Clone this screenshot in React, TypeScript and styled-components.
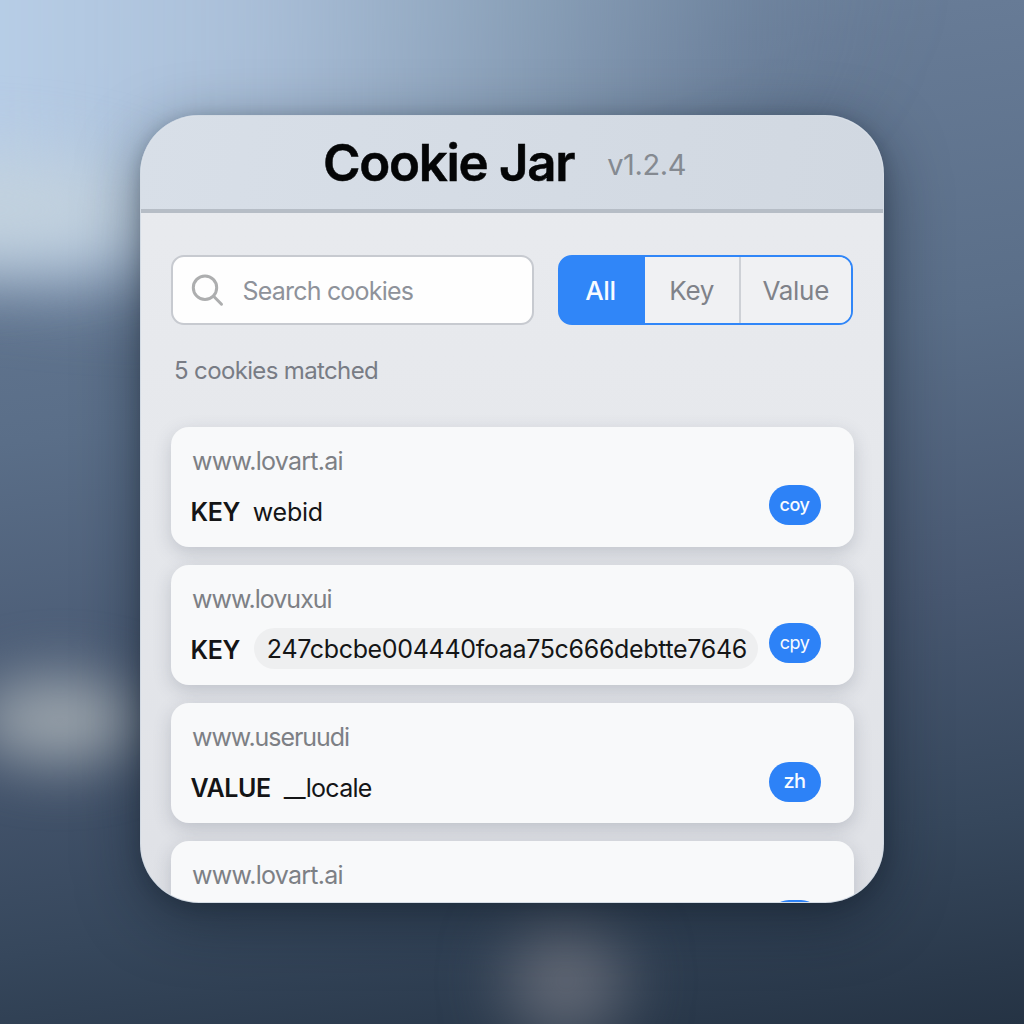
import React, { useState } from "react";
import styled, { createGlobalStyle } from "styled-components";

const GlobalStyle = createGlobalStyle`
  *, *::before, *::after { box-sizing: border-box; }
  body { margin: 0; font-family: Inter, "Liberation Sans", sans-serif; }
`;

const Desktop = styled.main`
  position: relative;
  width: 1024px;
  height: 1024px;
  padding: 115px 0 0 140px;
  overflow: hidden;
  background: linear-gradient(172deg, #70869f 0%, #677b96 12%, #5a6e88 38%, #485871 62%, #36475c 82%, #253344 100%);
`;

const Glow = styled.div<{ $x: number; $y: number; $w: number; $h: number; $color: string; $blur: number }>`
  position: absolute;
  left: ${(p) => p.$x}px;
  top: ${(p) => p.$y}px;
  width: ${(p) => p.$w}px;
  height: ${(p) => p.$h}px;
  border-radius: 50%;
  background: ${(p) => p.$color};
  filter: blur(${(p) => p.$blur}px);
`;

const Panel = styled.section`
  position: relative;
  display: flex;
  flex-direction: column;
  width: 744px;
  height: 788px;
  border: 1px solid rgba(205, 215, 226, 0.75);
  border-radius: 59px;
  overflow: hidden;
  background: linear-gradient(180deg, #e9ebef 0%, #e6e8ec 45%, #dfe1e6 100%);
  box-shadow: 0 16px 60px rgba(14, 24, 36, 0.5), 0 3px 16px rgba(14, 24, 36, 0.2);
`;

const Header = styled.header`
  display: flex;
  flex: none;
  align-items: flex-start;
  gap: 33px;
  height: 97px;
  padding: 17px 0 0 182px;
  border-bottom: 4px solid #b6bdc6;
  background: linear-gradient(100deg, #d8dfe8, #d1d8e1);
`;

const Title = styled.h1`
  margin: 0;
  color: #040506;
  font-size: 51px;
  font-weight: 600;
  line-height: 60px;
  letter-spacing: -1.3px;
  white-space: nowrap;
  -webkit-text-stroke: 0.5px #040506;
`;

const Version = styled.span`
  padding-top: 14px;
  color: #858a91;
  font-size: 29px;
  line-height: 36px;
  letter-spacing: -0.4px;
`;

const Toolbar = styled.div`
  display: flex;
  flex: none;
  gap: 24px;
  padding: 42px 30px 0 29.5px;
`;

const SearchBox = styled.label`
  display: flex;
  align-items: center;
  gap: 18px;
  width: 363px;
  height: 70px;
  padding-left: 18px;
  border: 2px solid #c7cad0;
  border-radius: 13px;
  background: #fefefe;
`;

const SearchInput = styled.input`
  width: 270px;
  padding: 2px 0 0;
  border: 0;
  outline: 0;
  background: transparent;
  color: #30343a;
  font: 400 25px Inter, "Liberation Sans", sans-serif;
  letter-spacing: -0.8px;
  &::placeholder { color: #8e929a; opacity: 1; }
`;

const Segments = styled.div`
  display: flex;
  width: 295px;
  height: 70px;
  border: 2px solid #3086f8;
  border-radius: 14px;
  overflow: hidden;
  background: linear-gradient(90deg, #3086f8 80px, #f0f1f3 80px);
`;

const Segment = styled.button<{ $active: boolean; $width: number; $divided?: boolean }>`
  flex: none;
  width: ${(p) => p.$width}px;
  padding: ${(p) => (p.$active ? "0 3px 0 0" : "0")};
  border: 0;
  border-left: ${(p) => (p.$divided ? "2px solid #ced1d6" : "0")};
  background: ${(p) => (p.$active ? "#3086f8" : "#f0f1f3")};
  color: ${(p) => (p.$active ? "#f7fbff" : "#7f8289")};
  font: ${(p) => (p.$active ? 500 : 400)} 26px Inter, "Liberation Sans", sans-serif;
  letter-spacing: -0.3px;
`;

const Count = styled.p`
  flex: none;
  margin: 31px 0 40.5px 33px;
  color: #787c85;
  font-size: 24px;
  line-height: 30px;
  letter-spacing: -0.64px;
`;

const List = styled.div`
  display: flex;
  flex-direction: column;
  gap: 18px;
  padding: 0 29.5px;
`;

const Card = styled.article`
  display: flex;
  flex: none;
  justify-content: space-between;
  height: 120.2px;
  padding: 0 33px 0 20px;
  border-radius: 18px;
  background: #f8f9fa;
  box-shadow: 0 6px 18px rgba(62, 72, 88, 0.21);
`;

const Details = styled.div`
  padding-top: 19px;
`;

const Domain = styled.div<{ $tracking: number }>`
  padding-left: 1.5px;
  color: #7d8085;
  font-size: 25px;
  line-height: 30px;
  letter-spacing: ${(p) => p.$tracking}px;
`;

const Entry = styled.div`
  display: flex;
  align-items: center;
  height: 42px;
  margin-top: 15px;
  color: #141516;
  font-size: 25px;
`;

const Label = styled.span`
  font-weight: 600;
  letter-spacing: -0.4px;
`;

const Value = styled.span<{ $pill?: boolean; $tracking: number }>`
  display: flex;
  align-items: center;
  height: ${(p) => (p.$pill ? "41px" : "30px")};
  margin-left: ${(p) => (p.$pill ? "14px" : "13px")};
  padding: ${(p) => (p.$pill ? "0 11px 0 13px" : "0")};
  margin-top: ${(p) => (p.$pill ? "-2px" : "0")};
  border-radius: 21px;
  background: ${(p) => (p.$pill ? "#eeeff0" : "transparent")};
  letter-spacing: ${(p) => p.$tracking}px;
`;

const Action = styled.button<{ $size: number; $weight: number }>`
  flex: none;
  width: 52px;
  height: 40px;
  margin-top: 58.7px;
  padding: 0 0 2px;
  border: 0;
  border-radius: 20px;
  background: #2d82f7;
  color: #f8fbff;
  font: ${(p) => p.$weight} ${(p) => p.$size}px Inter, "Liberation Sans", sans-serif;
  letter-spacing: -0.5px;
`;

const SearchIcon = () => (
  <svg width="34" height="34" viewBox="0 0 34 34" fill="none" stroke="#adaeaf" strokeWidth="3" strokeLinecap="round">
    <circle cx="14" cy="14.7" r="11.7" />
    <path d="M22.6 23.3 30.5 31.2" />
  </svg>
);

const cookies = [
  { domain: "www.lovart.ai", domainTracking: -0.75, label: "KEY", value: "webid", tracking: -0.25, action: "coy", size: 18 },
  { domain: "www.lovuxui", domainTracking: -1, label: "KEY", value: "247cbcbe004440foaa75c666debtte7646", tracking: -0.33, action: "cpy", size: 18, pill: true },
  { domain: "www.useruudi", domainTracking: -1.05, label: "VALUE", value: "__locale", tracking: -0.75, action: "zh", size: 20 },
  { domain: "www.lovart.ai", domainTracking: -0.75, label: "KEY", value: "webid", tracking: -0.25, action: "coy", size: 18 },
];

const filters = [
  { name: "All", width: 85 },
  { name: "Key", width: 94.5 },
  { name: "Value", width: 111.5 },
];

export default function App() {
  const [filter, setFilter] = useState("All");
  return (
    <>
      <GlobalStyle />
      <Desktop>
        <Glow
          $x={-500}
          $y={-370}
          $w={1400}
          $h={650}
          $color="linear-gradient(90deg, #b8cee7 480px, rgba(176, 197, 222, 0.9) 760px, rgba(158, 181, 204, 0.62) 1020px, rgba(140, 164, 190, 0.15) 1250px, transparent)"
          $blur={42}
        />
        <Glow $x={-240} $y={155} $w={400} $h={110} $color="rgba(196, 211, 222, 0.9)" $blur={34} />
        <Glow $x={-25} $y={678} $w={170} $h={84} $color="rgba(158, 167, 174, 0.98)" $blur={30} />
        <Glow $x={508} $y={920} $w={116} $h={120} $color="rgba(108, 113, 124, 0.85)" $blur={33} />
        <Panel>
          <Header>
            <Title>Cookie Jar</Title>
            <Version>v1.2.4</Version>
          </Header>
          <Toolbar>
            <SearchBox>
              <SearchIcon />
              <SearchInput placeholder="Search cookies" />
            </SearchBox>
            <Segments>
              {filters.map((f) => (
                <Segment
                  key={f.name}
                  $active={filter === f.name}
                  $width={f.width}
                  $divided={f.name === "Value"}
                  onClick={() => setFilter(f.name)}
                >
                  {f.name}
                </Segment>
              ))}
            </Segments>
          </Toolbar>
          <Count>5 cookies matched</Count>
          <List>
            {cookies.map((c, i) => (
              <Card key={i}>
                <Details>
                  <Domain $tracking={c.domainTracking}>{c.domain}</Domain>
                  <Entry>
                    <Label>{c.label}</Label>
                    <Value $pill={c.pill} $tracking={c.tracking}>{c.value}</Value>
                  </Entry>
                </Details>
                <Action $size={c.size} $weight={c.pill ? 400 : 500}>{c.action}</Action>
              </Card>
            ))}
          </List>
        </Panel>
      </Desktop>
    </>
  );
}
